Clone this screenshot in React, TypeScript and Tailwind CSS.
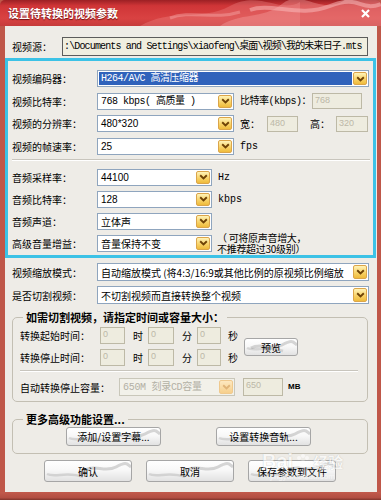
import React from 'react';

const MONO = "font-['Liberation_Mono','Noto_Sans_CJK_SC',monospace]";
const SANS = "font-['Liberation_Sans','Noto_Sans_CJK_SC',sans-serif]";

function Dd({ disabled = false }: { disabled?: boolean }) {
  return (
    <span
      className={`flex w-[14px] shrink-0 items-center justify-center rounded-[2px] border ${
        disabled
          ? 'border-[#efc98e] bg-[linear-gradient(180deg,#fde8c0,#f6cf8c)]'
          : 'border-[#dba54a] bg-[linear-gradient(180deg,#fff3b8,#f7d063_60%,#efbb3c)]'
      }`}
    >
      <svg width="9" height="6" viewBox="0 0 9 6">
        <path d="M1.2 1.2 L4.5 4.4 L7.8 1.2" fill="none" stroke={disabled ? '#e0b478' : '#6e4206'} strokeWidth="1.9" />
      </svg>
    </span>
  );
}

function Select({
  w,
  h = 'h-[17px]',
  children,
  selected = false,
  disabled = false,
  mono = false,
}: {
  w: string;
  h?: string;
  children: React.ReactNode;
  selected?: boolean;
  disabled?: boolean;
  mono?: boolean;
}) {
  return (
    <div
      className={`flex ${w} ${h} shrink-0 border p-px ${
        disabled ? 'border-[#c9c7ba] bg-[#f2f1ea] text-[#b3b0a5]' : 'border-[#8fa5be] bg-white'
      }`}
    >
      <div className="flex min-w-0 flex-1 overflow-hidden whitespace-nowrap pr-px">
        <span
          className={`flex h-full flex-1 items-center pl-[2px] ${selected ? 'bg-[#2f62bb] text-white' : ''} ${
            mono ? MONO + ' tracking-[-0.5px]' : ''
          }`}
        >
          {children}
        </span>
      </div>
      <Dd disabled={disabled} />
    </div>
  );
}

function Field({ w, h = 'h-[17px]', v }: { w: string; h?: string; v: string }) {
  return (
    <div
      className={`${w} ${h} shrink-0 border border-[#bdb9a6] bg-[#eeecdf] pl-[2px] text-[9px] leading-[13px] text-[#bcb8a8] ${SANS}`}
    >
      {v}
    </div>
  );
}

function Btn({ w, h, children }: { w: string; h: string; children: React.ReactNode }) {
  return (
    <div
      className={`relative flex ${w} ${h} shrink-0 items-center justify-center overflow-hidden rounded-[3px] border border-[#a6a6a6] bg-[linear-gradient(180deg,#ffffff_0%,#f8f8f8_45%,#e2e2e2_100%)] text-[10px]`}
    >
      <svg className="absolute right-0 top-0" width="48" height="14" viewBox="0 0 48 14">
        <path d="M2 9 C12 3, 22 12, 33 6 S 44 3, 48 6" stroke="#8c8c8c" strokeOpacity="0.35" strokeWidth="3" fill="none" />
      </svg>
      <svg className="absolute bottom-0 left-0" width="40" height="12" viewBox="0 0 40 12">
        <path d="M2 5 C10 9, 22 2, 38 8" stroke="#8c8c8c" strokeOpacity="0.28" strokeWidth="2.5" fill="none" />
      </svg>
      <span className="relative">{children}</span>
    </div>
  );
}

function Label({ w = 'w-[85px]', children }: { w?: string; children: React.ReactNode }) {
  return <span className={`${w} shrink-0 whitespace-nowrap`}>{children}</span>;
}

function Etch({ className = '' }: { className?: string }) {
  return <div className={`h-[2px] border-t border-b border-t-[#c8c5bd] border-b-white ${className}`} />;
}

function TitleBar() {
  return (
    <div className="relative h-[26px] shrink-0 overflow-hidden rounded-t-[5px] bg-[linear-gradient(180deg,#9c2024_0%,#cf3537_22%,#d94242_70%,#c63b3b_100%)]">
      <svg className="absolute inset-0" width="381" height="26" viewBox="0 0 381 26">
        <path d="M140 26 C170 8, 200 22, 230 6 S 280 14, 300 2 L300 26 Z" fill="#f08a8a" opacity="0.35" />
        <path d="M220 26 C240 12, 262 20, 282 4 S 320 16, 345 0 L381 0 L381 26 Z" fill="#f4a0a0" opacity="0.4" />
        <path d="M250 10 C270 2, 300 18, 330 6 S 360 12, 381 4" stroke="#fbc0c0" strokeOpacity="0.5" strokeWidth="4" fill="none" />
        <path d="M170 18 C190 10, 215 20, 240 12" stroke="#f6a8a8" strokeOpacity="0.45" strokeWidth="3" fill="none" />
      </svg>
      <div className="relative flex h-full items-center justify-between pl-[8px] pr-[11px]">
        <span className="text-[11px] font-bold text-white [text-shadow:0_1px_1px_#6a1010]">设置待转换的视频参数</span>
        <svg width="9" height="9" viewBox="0 0 9 9">
          <path d="M1 1 L8 8 M8 1 L1 8" stroke="#ffffff" strokeWidth="2.2" />
        </svg>
      </div>
    </div>
  );
}

export default function App() {
  return (
    <div
      className={`relative flex h-[500px] w-[381px] flex-col overflow-hidden bg-[#bf5749] text-[10px] text-black font-['Noto_Sans_CJK_SC',sans-serif]`}
    >
      <TitleBar />

      <div className="ml-[5px] mr-[4px] flex h-[466px] flex-col bg-[#eeece7]">
        {/* source */}
        <div className="mt-[11px] flex h-[19px] items-center pl-[7px]">
          <Label w="w-[50px]">视频源：</Label>
          <div
            className={`flex h-full w-[306px] items-center overflow-hidden whitespace-nowrap border border-[#5c5c5c] bg-[#f0eee0] pl-px text-[10px] tracking-[-0.85px] ${MONO}`}
          >
            :\Documents and Settings\xiaofeng\桌面\视频\我的未来日子.mts
          </div>
        </div>

        {/* cyan box */}
        <div className="mr-px mt-[2px] flex flex-col border-[3px] border-[#3cc2e6] pb-px pl-[4px] pt-[6px]">
          <div className="flex h-[23px] items-center">
            <Label>视频编码器：</Label>
            <Select w="w-[272px]" selected mono>
              H264/AVC 高清压缩器
            </Select>
          </div>
          <div className="flex h-[22px] items-center">
            <Label>视频比特率：</Label>
            <Select w="w-[137px]" mono>
              768 kbps( 高质量 )
            </Select>
            <span className={`ml-[6px] w-[72px] tracking-[-0.5px] ${MONO}`}>比特率(kbps)：</span>
            <Field w="w-[50px]" h="h-[16px]" v="768" />
          </div>
          <div className="flex h-[23px] items-center">
            <Label>视频的分辨率：</Label>
            <Select w="w-[137px]">
              <span className={SANS}>480*320</span>
            </Select>
            <span className="ml-[6px] w-[27px]">宽：</span>
            <Field w="w-[31px]" h="h-[16px]" v="480" />
            <span className="ml-[12px] w-[26px]">高：</span>
            <Field w="w-[32px]" h="h-[16px]" v="320" />
          </div>
          <div className="flex h-[22px] items-center">
            <Label>视频的帧速率：</Label>
            <Select w="w-[137px]">
              <span className={SANS}>25</span>
            </Select>
            <span className={`ml-[6px] ${MONO}`}>fps</span>
          </div>

          <Etch className="mr-[3px] mt-[2px]" />

          <div className="mt-[5px] flex h-[22px] items-center">
            <Label>音频采样率：</Label>
            <Select w="w-[115px]">
              <span className={SANS}>44100</span>
            </Select>
            <span className={`ml-[6px] ${MONO}`}>Hz</span>
          </div>
          <div className="flex h-[22px] items-center">
            <Label>音频比特率：</Label>
            <Select w="w-[115px]">
              <span className={SANS}>128</span>
            </Select>
            <span className={`ml-[6px] ${MONO}`}>kbps</span>
          </div>
          <div className="flex h-[22px] items-center">
            <Label>音频声道：</Label>
            <Select w="w-[115px]">立体声</Select>
          </div>
          <div className="flex h-[22px] items-center">
            <Label>高级音量增益：</Label>
            <Select w="w-[115px]">音量保持不变</Select>
            <div className="ml-[5px] flex flex-col text-[10px] leading-[11px] tracking-[-0.3px]">
              <span>（ 可将原声音增大，</span>
              <span>不推荐超过30级别）</span>
            </div>
          </div>
        </div>

        {/* scale / cut */}
        <div className="mt-[3px] flex h-[22px] items-center pl-[7px]">
          <Label>视频缩放模式：</Label>
          <Select w="w-[272px]" h="h-[18px]">
            自动缩放模式 (将4:3/16:9或其他比例的原视频比例缩放
          </Select>
        </div>
        <div className="mt-px flex h-[22px] items-center pl-[7px]">
          <Label>是否切割视频：</Label>
          <Select w="w-[272px]" h="h-[18px]">
            不切割视频而直接转换整个视频
          </Select>
        </div>

        {/* group 1 */}
        <fieldset className="ml-[7px] mt-[4px] w-[356px] rounded-[5px] border border-[#c3bfb3] pb-[3px]">
          <legend className="ml-[10px] px-[3px] text-[11px] font-bold leading-[14px]">如需切割视频，请指定时间或容量大小：</legend>
          <div className="flex items-center pl-[7px]">
            <div className="flex flex-col">
              <div className="flex h-[22px] items-center">
                <Label w="w-[80px]">转换起始时间：</Label>
                <Field w="w-[25px]" v="0" />
                <span className="ml-[8px] w-[15px]">时</span>
                <Field w="w-[26px]" v="0" />
                <span className="ml-[8px] w-[15px]">分</span>
                <Field w="w-[24px]" v="0" />
                <span className="ml-[7px] w-[10px]">秒</span>
              </div>
              <div className="flex h-[22px] items-center">
                <Label w="w-[80px]">转换停止时间：</Label>
                <Field w="w-[25px]" v="0" />
                <span className="ml-[8px] w-[15px]">时</span>
                <Field w="w-[26px]" v="0" />
                <span className="ml-[8px] w-[15px]">分</span>
                <Field w="w-[24px]" v="0" />
                <span className="ml-[7px] w-[10px]">秒</span>
              </div>
            </div>
            <div className="ml-[6px] mt-[2px]">
              <Btn w="w-[54px]" h="h-[18px]">预览</Btn>
            </div>
          </div>
          <Etch className="ml-[7px] mr-[9px] mt-[2px]" />
          <div className="mt-[4px] flex h-[22px] items-center pl-[7px]">
            <Label w="w-[99px]">自动转换停止容量：</Label>
            <Select w="w-[116px]" h="h-[18px]" disabled>
              <span className={`tracking-[-0.3px] ${MONO}`}>650M 刻录CD容量</span>
            </Select>
            <Field w="w-[40px] ml-[8px]" h="h-[18px]" v="650" />
            <span className={`ml-[5px] text-[8px] font-bold ${SANS}`}>MB</span>
          </div>
        </fieldset>

        {/* group 2 */}
        <fieldset className="ml-[7px] mt-[10px] w-[356px] rounded-[5px] border border-[#c3bfb3] pb-[7px]">
          <legend className="ml-[10px] px-[3px] text-[11px] font-bold leading-[14px]">更多高级功能设置...</legend>
          <div className="ml-[53px] mt-px flex gap-[55px]">
            <Btn w="w-[95px]" h="h-[19px]">添加/设置字幕...</Btn>
            <Btn w="w-[95px]" h="h-[19px]">设置转换音轨...</Btn>
          </div>
        </fieldset>

        {/* bottom buttons */}
        <div className="ml-[39px] mt-[6px] flex gap-[14px]">
          <Btn w="w-[88px]" h="h-[22px]">确认</Btn>
          <Btn w="w-[88px]" h="h-[22px]">取消</Btn>
          <Btn w="w-[88px]" h="h-[22px]">保存参数到文件</Btn>
        </div>
      </div>

      <div className="h-[8px] shrink-0 bg-[linear-gradient(180deg,#c25a4c_0%,#b24e42_70%,#7e342c_100%)]" />

      {/* watermark */}
      <div className="pointer-events-none absolute left-[262px] top-[450px] flex flex-col items-center opacity-60">
        <div className="flex items-end gap-[2px] text-white [text-shadow:0_0_1px_#9a9a9a]">
          <span className={`text-[20px] font-bold leading-[22px] ${SANS}`}>Bai</span>
          <svg width="16" height="16" viewBox="0 0 16 16" className="mb-[3px]">
            <circle cx="4" cy="5" r="2" fill="#ffffff" />
            <circle cx="8" cy="3" r="2" fill="#ffffff" />
            <circle cx="12" cy="5" r="2" fill="#ffffff" />
            <ellipse cx="8" cy="11" rx="4" ry="3.5" fill="#ffffff" />
          </svg>
          <span className="text-[15px] font-bold leading-[20px]">经验</span>
        </div>
        <span className={`text-[8px] leading-[10px] text-white ${SANS}`}>jingyan.baidu.com</span>
      </div>
    </div>
  );
}
